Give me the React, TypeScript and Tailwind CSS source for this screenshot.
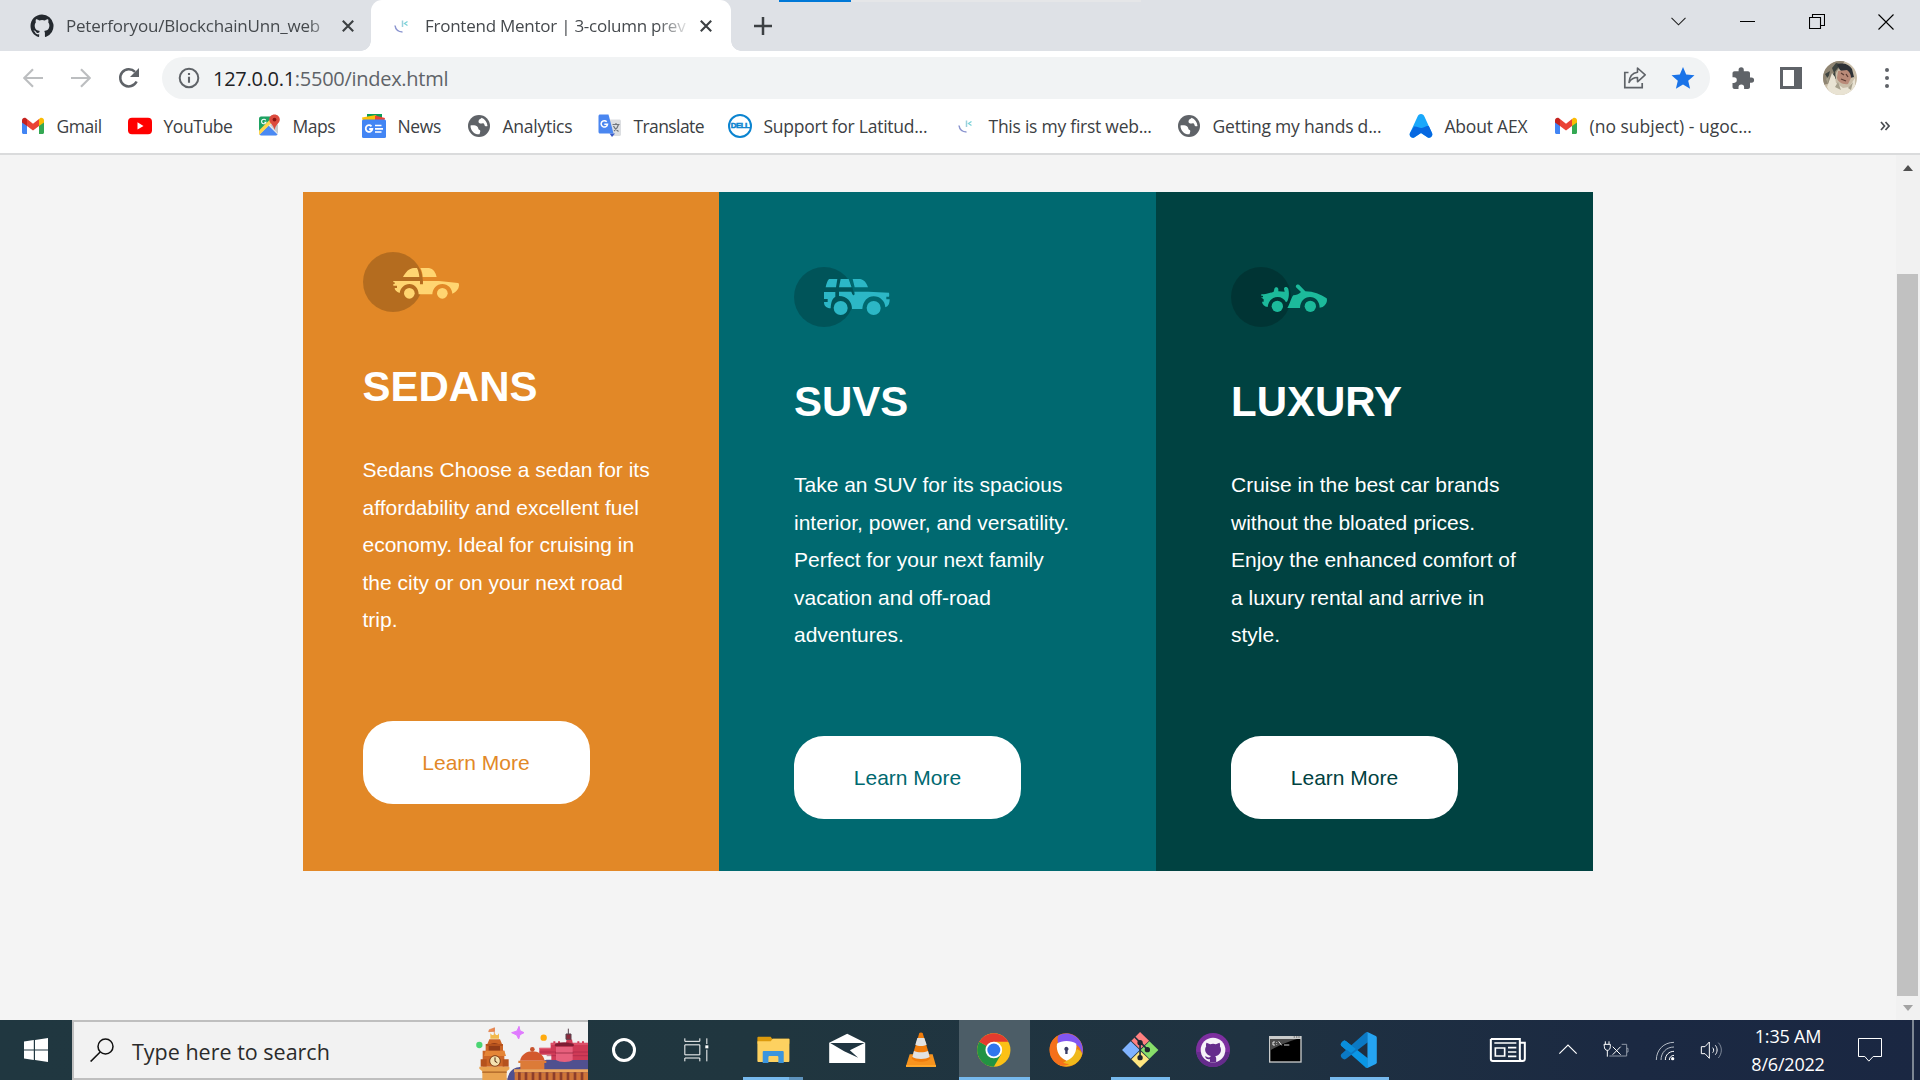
import React from "react";
import type { ReactNode } from "react";

function Svg({ vb, className, children }: { vb: string; className: string; children: ReactNode }) {
  return (
    <svg viewBox={vb} className={className + " shrink-0"} fill="none">
      {children}
    </svg>
  );
}

/* ---------- site icons ---------- */

const octocat =
  "M12 .5C5.65.5.5 5.65.5 12c0 5.1 3.3 9.4 7.86 10.9.58.1.79-.25.79-.56v-2.1c-3.2.7-3.87-1.4-3.87-1.4-.52-1.33-1.28-1.69-1.28-1.69-1.05-.71.08-.7.08-.7 1.16.08 1.77 1.19 1.77 1.19 1.03 1.77 2.7 1.26 3.36.96.1-.75.4-1.26.73-1.55-2.55-.29-5.24-1.28-5.24-5.68 0-1.26.45-2.28 1.19-3.09-.12-.29-.52-1.46.11-3.04 0 0 .97-.31 3.17 1.18a11 11 0 0 1 5.76 0c2.2-1.49 3.16-1.18 3.16-1.18.63 1.58.23 2.75.11 3.04.74.81 1.19 1.83 1.19 3.09 0 4.41-2.69 5.38-5.25 5.67.41.36.78 1.06.78 2.13v3.16c0 .31.21.67.8.56A11.5 11.5 0 0 0 12 .5Z";

const GithubIcon = () => (
  <Svg vb="0 0 24 24" className="h-6 w-6">
    <path d={octocat} fill="#24292f" />
  </Svg>
);

const MentorIcon = () => (
  <Svg vb="0 0 24 24" className="h-6 w-6">
    <path d="M13.500 6.500v6.500" stroke="#9bd0dc" strokeWidth="1.500" />
    <path d="M18.500 7.500l-3 2 3 2" stroke="#7cd3d9" strokeWidth="1.300" />
    <path d="M6 11.500c.6 4 3.400 6.400 7.500 6.400" stroke="#8a94cf" strokeWidth="1.500" />
  </Svg>
);

const GmailIcon = () => (
  <Svg vb="0 0 24 24" className="h-6 w-6">
    <path d="M1 6v12.500c0 .9.700 1.500 1.500 1.500H6v-9z" fill="#4285f4" />
    <path d="M18 11v9h3.500c.9 0 1.500-.7 1.500-1.500V6z" fill="#34a853" />
    <path d="M6 5v7l6 4.600 6-4.600V5l-6 4.700z" fill="#ea4335" />
    <path d="M1 6.500C1 4.300 3.400 3.200 5 4.300L6 5v7L1 8.500z" fill="#c5221f" />
    <path d="M23 6.500c0-2.200-2.400-3.300-4-2.200L18 5v7l5-3.500z" fill="#fbbc04" />
  </Svg>
);

const YoutubeIcon = () => (
  <Svg vb="0 0 24 24" className="h-6 w-6">
    <rect x="0" y="3.700" width="24" height="16.500" rx="4" fill="#ff0000" />
    <path d="M9.500 8.300v7.200l6-3.600z" fill="#fff" />
  </Svg>
);

const MapsIcon = () => (
  <Svg vb="0 0 24 24" className="h-6 w-6">
    <rect x="2" y="2.500" width="19" height="19" rx="2" fill="#e8eaed" />
    <path d="M4 2.500h13L2 18V4.500c0-1 .9-2 2-2z" fill="#1ea362" />
    <path d="M2.500 20.500L11.500 11.500l9 9c-.5.700-1 1-1.600 1H4.500c-.8 0-1.500-.3-2-1z" fill="#4a89f3" />
    <path d="M2 16.500L15.500 3l3.500 1.500L2.500 20.800c-.4-.4-.5-.8-.5-1.300z" fill="#ffd54b" />
    <path d="M13 11l8 8.500V11l-3-2z" fill="#c8cacd" />
    <path d="M17.500 0.500c3 0 5.300 2.200 5.300 5 0 3.800-4.300 5-5.300 10.500-1-5.500-5.300-6.700-5.300-10.500 0-2.800 2.300-5 5.300-5z" fill="#dc4b3e" />
    <circle cx="17.500" cy="5.600" r="1.900" fill="#891411" />
    <path d="M8.800 6.200a2.300 2.300 0 1 0 .3 2H7.200" stroke="#fff" strokeWidth="1.100" />
  </Svg>
);

const NewsIcon = () => (
  <Svg vb="0 0 24 24" className="h-6 w-6">
    <path d="M5 0h15v8H5z" fill="#0c9d58" />
    <path d="M0 3.500L14 1l3 7H1z" fill="#ffc107" />
    <path d="M13 1.500l10 2.500-1 4h-9z" fill="#ea4335" />
    <rect x="0" y="5.500" width="24" height="18.500" rx="1.500" fill="#4285f4" />
    <path d="M9.500 12.300a3.300 3.300 0 1 0 .8 2.700H7.200" stroke="#fff" strokeWidth="1.800" />
    <path d="M13 11.500h6.500M13 14.800h8M13 18h6.500" stroke="#fff" strokeWidth="1.700" />
  </Svg>
);

const GlobeIcon = () => (
  <Svg vb="0 0 24 24" className="h-6 w-6">
    <circle cx="12" cy="12" r="11" fill="#5f6368" />
    <path d="M3.500 11.500c2.500-.3 5.500-.2 7 1.200 1.300 1.300.3 2.700 2.200 3.300 1 .4.500 2.300-.2 4.300-5 .4-9-3.300-9-8.800z" fill="#fff" />
    <path d="M14.500 3.800c-.3 1.200-2.300 1.200-2.800 2.700-.5 1.400 0 2.700 1.400 3 1.900.3 2.300-.8 3.600 0 1.200.8.4 2.300 1.800 2.700.8.200 1.500.100 2-.2-.3-3.700-2.500-6.800-6-8.200z" fill="#fff" />
  </Svg>
);

const TranslateIcon = () => (
  <Svg vb="0 0 24 24" className="h-6 w-6">
    <path d="M9 5.500h12.500c.8 0 1.500.7 1.500 1.500v13.500c0 .8-.7 1.500-1.500 1.500H14z" fill="#dcdee1" />
    <path d="M14.500 10.500h7M18 9v1.500M20.500 10.500c-.7 3-2.500 5-4.500 6.500M15.500 12c1 2.500 2.700 4 5 5.500" stroke="#70767c" strokeWidth="1.200" />
    <path d="M11.500 19.500h5.500L14 23z" fill="#3a5bc7" />
    <path d="M2 .5h8.500l5 19H2c-.8 0-1.500-.7-1.500-1.500V2C.5 1.200 1.200.5 2 .5z" fill="#4a86f0" />
    <path d="M8.700 7.700a3.200 3.200 0 1 0 .8 2.600H6.300" stroke="#fff" strokeWidth="1.500" />
  </Svg>
);

const DellIcon = () => (
  <div className="flex h-6 w-6 shrink-0 items-center justify-center rounded-full border-2 border-[#0b84d0] bg-white">
    <span className="font-['Liberation_Sans'] text-[8px] font-black leading-none tracking-[-0.6px] text-[#0b84d0] [-webkit-text-stroke:0.5px_#0b84d0]">DELL</span>
  </div>
);

const AexIcon = () => (
  <Svg vb="0 0 24 24" className="h-6 w-6">
    <path d="M12 0c1.800 0 2.800 1.200 3.400 2.500L23 19c1.300 3-1.500 5.500-4.200 4.500L12 19l-6.800 4.500C2.500 24.500-.3 22 1 19L8.600 2.500C9.200 1.200 10.200 0 12 0z" fill="#19a8fb" />
    <path d="M5 12.500c4-.5 6 3 10 .8 2-1 3-1.300 4.800-1.200L23 19c1.300 3-1.500 5.500-4.200 4.500L12 19l-6.800 4.500C2.500 24.500-.3 22 1 19z" fill="#0668e1" />
  </Svg>
);

/* ---------- browser chrome ---------- */

const ui = "font-['Open_Sans',sans-serif] whitespace-nowrap";

const CloseTab = () => (
  <Svg vb="0 0 12 12" className="h-3 w-3">
    <path d="M.8.800l10.400 10.400M11.200.800L.8 11.200" stroke="#3c4043" strokeWidth="2.100" />
  </Svg>
);

function TabStrip() {
  return (
    <div className="relative flex h-[51px] items-stretch bg-[#dee1e6]">
      <div className="flex w-[371px] items-center pl-[30px]">
        <GithubIcon />
        <div className={ui + " ml-3 w-[262px] text-[17px] tracking-[-0.2px] text-[#45494d] [mask-image:linear-gradient(to_right,#000_92%,rgba(0,0,0,0.3))]"}>
          Peterforyou/BlockchainUnn_web
        </div>
        <div className="ml-[14px]"><CloseTab /></div>
      </div>
      <div className="relative flex w-[360px] items-center rounded-t-[11px] bg-white pl-[18px]">
        <MentorIcon />
        <div className={ui + " ml-[12px] w-[263px] text-[17px] tracking-[-0.25px] text-[#45494d] [mask-image:linear-gradient(to_right,#000_88%,rgba(0,0,0,0.1))]"}>
          Frontend Mentor | 3-column prev
        </div>
        <div className="ml-[12px]"><CloseTab /></div>
        <div className="absolute -left-[10px] bottom-0 h-[10px] w-[10px] bg-[radial-gradient(circle_at_0_0,#dee1e6_9.500px,#fff_10px)]" />
        <div className="absolute -right-[10px] bottom-0 h-[10px] w-[10px] bg-[radial-gradient(circle_at_100%_0,#dee1e6_9.500px,#fff_10px)]" />
      </div>
      <div className="flex items-center pl-[23px]">
        <Svg vb="0 0 18 18" className="h-[18px] w-[18px]">
          <path d="M9 0v18M0 9h18" stroke="#3c4043" strokeWidth="2.500" />
        </Svg>
      </div>
      <div className="ml-auto flex h-[43px] items-center">
        <div className="flex w-[69px] justify-center">
          <Svg vb="0 0 15 9" className="h-[9px] w-[15px]"><path d="M.5.800l7 7 7-7" stroke="#222" strokeWidth="1.100" /></Svg>
        </div>
        <div className="flex w-[69px] justify-center">
          <div className="h-px w-[15px] bg-black" />
        </div>
        <div className="flex w-[69px] justify-center">
          <Svg vb="0 0 16 16" className="h-4 w-4">
            <path d="M.5 3.500h11v11H.5zM3.500 3.500v-3h12v11h-4" stroke="#000" strokeWidth="1.100" />
          </Svg>
        </div>
        <div className="flex w-[69px] justify-center">
          <Svg vb="0 0 16 16" className="h-4 w-4"><path d="M.5.500l15 15M15.500.500l-15 15" stroke="#000" strokeWidth="1.100" /></Svg>
        </div>
      </div>
      <div className="absolute left-[779px] top-0 flex h-[2px] w-[362px] bg-[#e5e6e8]">
        <div className="w-[72px] bg-[#0078d7]" />
      </div>
    </div>
  );
}

function Avatar() {
  return (
    <Svg vb="0 0 34 34" className="h-[34px] w-[34px] rounded-full">
      <rect width="34" height="34" fill="#c9bda8" />
      <path d="M0 8l12-8h10l-8 10-6 12-8 2z" fill="#8f8573" />
      <path d="M9 7l4-5 5 1-7 9zM2 13l5-3-2 8zM8 15l4-4 1 7z" fill="#3e4440" />
      <path d="M14 4c5-3 12-1 15 4l2 8-4 1-10-8z" fill="#2d3136" />
      <path d="M15 10l9-1c3 2 4 5 4 8l-3 6c-5 1-10-2-11-6z" fill="#b98a78" />
      <path d="M18 12l3 2M23 13l2 3M18 18l5 2" stroke="#5c3c34" strokeWidth="1.300" />
      <path d="M4 26l5-14 3 4 1 6 7 5 6-1 6-9v17H8z" fill="#e9e3d3" />
      <path d="M12 26l3-5 3 8zM25 27l5-6-2 8zM3 18l3-3-1 8z" fill="#a7a08c" />
    </Svg>
  );
}

function Toolbar() {
  return (
    <div className="flex h-[54px] items-center bg-white pl-[23px]">
      <Svg vb="0 0 20 20" className="h-5 w-5"><path d="M20 10H1.500M10 1.200L1.200 10l8.800 8.800" stroke="#bcbec0" strokeWidth="2.200" /></Svg>
      <Svg vb="0 0 20 20" className="ml-7 h-5 w-5"><path d="M0 10h18.500M10 1.200L18.800 10 10 18.800" stroke="#bcbec0" strokeWidth="2.200" /></Svg>
      <Svg vb="0 0 22 22" className="ml-[27px] h-[22px] w-[22px]">
        <path d="M18.600 14.500A8.600 8.600 0 1 1 17 4.800" stroke="#5f6368" strokeWidth="2.500" />
        <path d="M21 1v9h-9z" fill="#5f6368" />
      </Svg>
      <div className="ml-[22px] flex h-[42px] w-[1548px] items-center rounded-full bg-[#f1f3f4] pl-[16px]">
        <Svg vb="0 0 22 22" className="h-[22px] w-[22px]">
          <circle cx="11" cy="11" r="9.300" stroke="#5f6368" strokeWidth="2" />
          <path d="M11 9.800v6M11 6v2.100" stroke="#5f6368" strokeWidth="2.100" />
        </Svg>
        <div className={ui + " ml-[13px] mt-[2px] text-[20px] tracking-[-0.28px] text-[#5f6368]"}>
          <span className="text-[#202124]">127.0.0.1</span>:5500/index.html
        </div>
        <Svg vb="0 0 24 24" className="ml-auto h-6 w-6">
          <path d="M5.500 6.500H1.800v15.200h17.400V17" stroke="#5f6368" strokeWidth="1.700" />
          <path d="M14.500 2v4.300C9 7 6.500 11 6 16.500c2-3.500 4.500-5 8.500-5v4.300l7.700-7z" stroke="#5f6368" strokeWidth="1.600" strokeLinejoin="round" />
        </Svg>
        <Svg vb="0 0 24 24" className="ml-6 mr-[15px] h-6 w-6">
          <path d="M12 1l3.200 7.600 8.300.7-6.300 5.400 1.900 8.100L12 18.500l-7.100 4.300 1.900-8.100L.5 9.300l8.300-.7z" fill="#1a73e8" />
        </Svg>
      </div>
      <Svg vb="0 0 24 24" className="ml-[21px] h-6 w-6">
        <path d="M20.500 11.500H19V7.300c0-1.100-.9-2-2-2h-4.200V3.800a2.600 2.600 0 0 0-5.200 0v1.500H3.500c-1.100 0-2 .9-2 2v4H3a2.800 2.800 0 0 1 0 5.600H1.500v4c0 1.100.9 2 2 2h4v-1.500a2.800 2.800 0 0 1 5.600 0v1.500H17c1.100 0 2-.9 2-2v-4.200h1.500a2.600 2.600 0 0 0 0-5.200z" fill="#5f6368" />
      </Svg>
      <div className="ml-[25px] h-[22px] w-[22px] border-[3px] border-r-[8px] border-[#5f6368]" />
      <div className="ml-[21px]"><Avatar /></div>
      <div className="ml-[28px] flex flex-col gap-[4px]">
        <div className="h-1 w-1 rounded-full bg-[#5f6368]" />
        <div className="h-1 w-1 rounded-full bg-[#5f6368]" />
        <div className="h-1 w-1 rounded-full bg-[#5f6368]" />
      </div>
    </div>
  );
}

const bookmarks: { label: string; icon: ReactNode; box: string }[] = [
  { label: "Gmail", icon: <GmailIcon />, box: "w-[107px] tracking-[-0.45px]" },
  { label: "YouTube", icon: <YoutubeIcon />, box: "w-[129px] tracking-[-0.45px]" },
  { label: "Maps", icon: <MapsIcon />, box: "w-[105px] tracking-[-0.45px]" },
  { label: "News", icon: <NewsIcon />, box: "w-[105px] tracking-[-0.35px]" },
  { label: "Analytics", icon: <GlobeIcon />, box: "w-[131px] tracking-[-0.25px]" },
  { label: "Translate", icon: <TranslateIcon />, box: "w-[130px] tracking-[-0.6px]" },
  { label: "Support for Latitud...", icon: <DellIcon />, box: "w-[225px] tracking-[-0.25px]" },
  { label: "This is my first web...", icon: <MentorIcon />, box: "w-[224px] tracking-[-0.25px]" },
  { label: "Getting my hands d...", icon: <GlobeIcon />, box: "w-[232px] tracking-[-0.2px]" },
  { label: "About AEX", icon: <AexIcon />, box: "w-[145px] tracking-[-0.2px]" },
  { label: "(no subject) - ugoc...", icon: <GmailIcon />, box: "w-[220px] tracking-[0px]" },
];

function BookmarkBar() {
  return (
    <div className="flex h-[50px] items-center border-b-2 border-[#dadbdc] bg-white pb-[6px] pl-[21px]">
      {bookmarks.map((b, i) => (
        <div key={i} className={b.box + " flex shrink-0 items-center gap-[11.500px]"}>
          {b.icon}
          <span className={ui + " text-[17.500px] text-[#3c4043]"}>{b.label}</span>
        </div>
      ))}
      <Svg vb="0 0 10 10" className="ml-auto mr-[30px] h-[10px] w-[10px]">
        <path d="M1 1l3.500 4L1 9M5.500 1L9 5 5.500 9" stroke="#4a4d51" strokeWidth="1.700" />
      </Svg>
    </div>
  );
}

/* ---------- page ---------- */

const SedanCar = () => (
  <Svg vb="69 66 288 180" className="h-[60px] w-24">
    <circle cx="159" cy="156" r="90" fill="#000" fillOpacity=".2" />
    <g fill="#ffd571">
      <path d="M189 141c8-14 17-26 33-27h9c4 8 6 17 7 27zM241 114h26c13 2 20 14 23 27h-42c0-10-3-19-7-27z" />
      <path d="M160 153h80v10h9v-10h48c20 2 38 4 57 6 3 1 3 4 3 8-1 10-8 18-20 24-1-16-13-29-30-29s-29 13-30 31h-41c0-18-12-31-28-31-15 0-27 12-29 27-10-4-15-8-15-15h7v-7h-11v-5h4v-5c-4 0-5-2-4-4z" />
      <circle cx="208" cy="190" r="16" /><circle cx="307" cy="190" r="16" />
    </g>
  </Svg>
);

const SuvCar = () => (
  <Svg vb="42 51 288 180" className="h-[60px] w-24">
    <circle cx="132" cy="141" r="90" fill="#000" fillOpacity=".2" />
    <g fill="#2cb7c6">
      <path d="M147 87h25l-4 25h-31c2-9 4-18 10-25zM182 87h24l9 25h-38zM218 87h23c13 3 19 13 23 25h-40z" />
      <path d="M132 126h34v14c-8 5-13 14-14 35-13-1-20-7-20-19h11v-9h-11zM177 125h37l3 8c2 4 7 3 7-2l-1-6h42l62 3c1 5 1 8 0 12h-8v8h10c0 12-3 21-13 24-1-19-16-33-35-33-18 0-32 14-34 38h-31c0-22-15-39-39-39z" />
      <circle cx="182" cy="174" r="21" /><circle cx="281" cy="174" r="21" />
    </g>
  </Svg>
);

const LuxuryCar = () => (
  <Svg vb="63 51 288 180" className="h-[60px] w-24">
    <circle cx="153" cy="141" r="90" fill="#000" fillOpacity=".2" />
    <g fill="#1cba9b">
      <path d="M154 133c12 0 25-3 37-8l2-8c1-7 11-7 12 0v7l19 1-2-8c0-7 10-8 13 0 3 13 2 26-3 37l-4 3c-5-10-14-16-25-16-16 0-28 12-30 30-10-2-16-7-17-16h5v-7l-8-6h6v-4c-5 0-6-2-5-4z" />
      <path d="M258 112c-3-8 8-11 12-5l16 17c24 1 46 8 64 21 3 8-1 18-12 26l-9 2c0-18-12-32-29-32s-29 13-30 33h-38c9-14 11-30 18-38 8-1 16-2 23-10z" />
      <circle cx="202" cy="169" r="17" /><circle cx="301" cy="169" r="17" />
    </g>
  </Svg>
);

type CardProps = { car: ReactNode; title: string; lines: string[]; className: string; button: string };

function Card({ car, title, lines, className, button }: CardProps) {
  return (
    <div className={className + " flex flex-col items-start font-['Liberation_Sans',Arial,sans-serif] text-white"}>
      {car}
      <h2 className="mt-[51px] text-[42px] font-bold leading-[48px]">{title}</h2>
      <p className="mt-10 whitespace-nowrap text-[21px] leading-[37.500px]">
        {lines.map((l) => (
          <span key={l} className="block">{l}</span>
        ))}
      </p>
      <button className={button + " mt-[82px] h-[83px] w-[227px] rounded-[30px] bg-white pt-[2px] text-[21px]"}>Learn More</button>
    </div>
  );
}

function Page() {
  return (
    <div className="flex min-h-0 flex-1 bg-[#f4f4f4]">
      <div className="flex flex-1 pl-[303px] pt-[37px]">
        <div className="flex h-[679px]">
          <Card
            className="w-[416px] bg-[#e28827] pl-[59.500px] pt-[60px]"
            car={<SedanCar />}
            title="SEDANS"
            lines={["Sedans Choose a sedan for its", "affordability and excellent fuel", "economy. Ideal for cruising in", "the city or on your next road", "trip."]}
            button="text-[#e28827]"
          />
          <Card
            className="w-[437px] bg-[#006970] pl-[75px] pt-[75px]"
            car={<SuvCar />}
            title="SUVS"
            lines={["Take an SUV for its spacious", "interior, power, and versatility.", "Perfect for your next family", "vacation and off-road", "adventures."]}
            button="text-[#006970]"
          />
          <Card
            className="w-[437px] bg-[#004241] pl-[75px] pt-[75px]"
            car={<LuxuryCar />}
            title="LUXURY"
            lines={["Cruise in the best car brands", "without the bloated prices.", "Enjoy the enhanced comfort of", "a luxury rental and arrive in", "style."]}
            button="text-[#004241]"
          />
        </div>
      </div>
      <div className="flex w-6 flex-col items-center bg-[#f1f1f1] pr-[1px]">
        <Svg vb="0 0 10 6" className="mt-[10px] h-[6px] w-[10px]"><path d="M5 0l5 6H0z" fill="#505050" /></Svg>
        <div className="mt-[103px] h-[722px] w-[21px] bg-[#c1c1c1]" />
        <Svg vb="0 0 10 6" className="mt-[9px] h-[6px] w-[10px]"><path d="M0 0h10L5 6z" fill="#a3a3a3" /></Svg>
      </div>
    </div>
  );
}

/* ---------- taskbar ---------- */

const SearchArt = () => (
  <Svg vb="0 18 354 174" className="h-[58px] w-[118px]">
    <circle cx="28" cy="87" r="9.500" fill="#4bd573" />
    <circle cx="221" cy="65" r="9.500" fill="#ffab0f" />
    <path d="M147 31l3 13 12 6-12 6-4 13-6-12-15-7 16-5z" fill="#e07bff" stroke="#e07bff" strokeWidth="3" strokeLinejoin="round" />
    <path d="M112 192c2-20 14-36 34-38l84-23h124v61z" fill="#50508f" />
    <path d="M208 95h34v-15h8v-4h6v4h8v-4h6v4h18l2-10h16l2 10h14v-4h6v4h8v-4h6v4h12v52h-110v-16h-36z" fill="#cf3a56" />
    <path d="M208 98h34M242 84h112" stroke="#e8677c" strokeWidth="3" />
    <path d="M208 108h146M230 119h124" stroke="#a8284a" strokeWidth="2" />
    <path d="M258 92h50v40c-8 8-40 8-50 0z" fill="#e7607d" />
    <path d="M256 84c18-5 34-5 54 0v6h-54zM256 111h54" fill="#7e1d33" stroke="#7e1d33" strokeWidth="2" />
    <path d="M295 38v18M288 54h15v16h-15z" stroke="#59424e" fill="#8d2a3c" strokeWidth="3" />
    <path d="M150 134c4-18 20-28 37-28s33 10 37 28z" fill="#d3592d" />
    <circle cx="187" cy="100" r="7" fill="#c8542e" />
    <path d="M145 134h84v7h-6v20h-72v-20h-6z" fill="#dc7b38" />
    <path d="M132 160h222v9H132z" fill="#eda45a" />
    <path d="M134 169h220v23H134z" fill="#ce7438" />
    <path d="M148 169v23M168 169v23M189 169v23M210 169v23M231 169v23M252 169v23M273 169v23M294 169v23M315 169v23M336 169v23" stroke="#8c3e2b" strokeWidth="8" />
    <path d="M73 34v20M58 41l15-5v10l-17 1z" stroke="#dd7a45" strokeWidth="2" fill="#f08a4f" />
    <path d="M61 52l5 5h4l4-6 4 6h5l4-5v16H61z" fill="#f2b94d" />
    <path d="M58 70h32l6 14h3v20h4v48H38v-48h9V84h5z" fill="#cc6526" />
    <path d="M56 104V90c6-12 28-12 34 0v14z" fill="#923c17" />
    <path d="M32 130h18v22H32zM98 130h18v22H98zM48 84h50v6H48z" fill="#b5521d" />
    <path d="M47 104h56l5 16H42z" fill="#e58536" />
    <circle cx="75" cy="135" r="16" fill="#f5e2af" stroke="#7d3d16" strokeWidth="3" />
    <path d="M75 124v12l7 4" stroke="#4c2910" strokeWidth="3" />
    <path d="M28 152h90v8l-8 6v26H37v-26l-9-8z" fill="#e9a350" />
    <path d="M37 166h73v5H37z" fill="#b9712f" />
  </Svg>
);

function AppCell({ vb, children, bar, active }: { vb: string; children: ReactNode; bar?: ReactNode; active?: boolean }) {
  return (
    <div className="relative h-[60px] w-[73.200px] shrink-0">
      {active && <div className="absolute inset-y-0 left-[3px] w-[71px] bg-[#4c5d67]" />}
      <Svg vb={vb} className="relative h-[60px] w-[73.200px]">{children}</Svg>
      {bar}
    </div>
  );
}

const openBar = <div className="absolute bottom-0 left-[8px] h-[3px] w-[59px] bg-[#76b9ed]" />;

function Taskbar() {
  return (
    <div className="flex h-[60px] bg-[linear-gradient(to_right,#203740_0%,#20363f_40%,#1f3241_65%,#1b2942_85%,#1a2742_100%)]">
      <div className="flex w-[72px] items-center justify-center">
        <Svg vb="0 0 24 24" className="h-6 w-6">
          <path d="M0 3.500l9.800-1.400v9.300H0zM11 1.900L24 0v11.400H11zM0 12.600h9.800v9.300L0 20.500zM11 12.600h13V24l-13-1.900z" fill="#fff" />
        </Svg>
      </div>
      <div className="flex w-[516px] items-stretch border-2 border-r-0 border-[#bfbfbf] bg-[#f2f2f2]">
        <Svg vb="0 0 24 24" className="ml-4 mt-4 h-6 w-6">
          <circle cx="15.500" cy="8.500" r="7.500" stroke="#111" strokeWidth="1.500" />
          <path d="M10.200 14L.6 23.500" stroke="#111" strokeWidth="1.600" />
        </Svg>
        <div className={ui + " ml-[18px] mt-[13px] text-[21.500px] leading-[34px] text-[#2b2b2b]"}>Type here to search</div>
        <div className="-mb-[2px] ml-auto"><SearchArt /></div>
      </div>
      <div className="flex w-[72px] items-center justify-center">
        <div className="h-6 w-6 rounded-full border-[3px] border-white" />
      </div>
      <div className="flex w-[76.600px] items-center pl-6">
        <Svg vb="251 83 75 72" className="h-6 w-[25px]">
          <path d="M253.500 84v9h45v-9M253.500 153v-10h45v10M253.500 103.500h45v30h-45zM319.500 84v17M319.500 118v35" stroke="#fff" strokeWidth="3" />
          <rect x="315" y="105" width="9" height="9" fill="#fff" />
        </Svg>
      </div>
      <AppCell
        vb="409.8 30 219.6 180"
        bar={
          <div className="absolute bottom-0 left-[6px] flex h-[3px] w-[60px] bg-[#5e93bd]">
            <div className="w-[46px] bg-[#76b9ed]" />
          </div>
        }
      >
        <path d="M471 83c0-2 2-3 4-3h36l4 6h50c2 0 2 1 2 3v12h-96z" fill="#dc9a0c" />
        <path d="M471 94h40l6-8h48c2 0 2 1 2 3v64c0 2-1 3-3 3h-90c-2 0-3-1-3-3z" fill="#fdd160" />
        <path d="M487 126c0-2 1-3 3-3h57c2 0 3 1 3 3v33h-16v-17c0-2-1-4-4-4h-22c-3 0-4 2-4 4v17h-17z" fill="#3b95dd" />
      </AppCell>
      <AppCell vb="629.4 30 219.6 180">
        <path d="M687 98l54-27 54 27v61H687z" fill="#fff" />
        <path d="M690 99h103l-44 22 25 22-42-19z" fill="#203541" />
      </AppCell>
      <AppCell vb="849 30 219.6 180">
        <path d="M929 133h69l10 35-2 3h-86l-2-3z" fill="#f7931e" />
        <path d="M918 165h90v6h-90z" fill="#ffa72b" />
        <path d="M958 69c2-2 8-2 10 0l23 76c-8 14-48 14-56 0z" fill="#f07c0b" />
        <path d="M952 84h21l7 20c-9 5-26 5-34 0zM942 123c10 5 32 5 42 0l5 18c-11 8-41 8-52 0z" fill="#e2e2e2" />
      </AppCell>
      <AppCell active vb="1068.6 30 219.600 180" bar={<div className="absolute bottom-0 left-[3px] h-[3px] w-[71px] bg-[#76b9ed]" />}>
        <circle cx="1182" cy="120" r="50" fill="#fbc116" />
        <path d="M1182 120l-43.300-25A50 50 0 0 0 1182 170l22-37z" fill="#229342" />
        <path d="M1182 120l-43.300-25A50 50 0 0 1 1225.300 95H1182z" fill="#e33b2e" />
        <circle cx="1182" cy="120" r="25" fill="#fff" />
        <circle cx="1182" cy="120" r="19.500" fill="#3076ee" />
      </AppCell>
      <AppCell vb="88.2 30 219.6 180">
        <circle cx="200" cy="120" r="50" fill="#ec7a10" />
        <path d="M177 76A50 50 0 0 1 248 134c-3-22-18-34-38-38l-34 6c-3-10-3-18 1-26z" fill="#8256f0" />
        <path d="M248 132A50 50 0 0 1 172 161c26 0 42-16 60-44 8 4 14 8 16 15z" fill="#efb91b" />
        <path d="M173 78c-4 16-6 52 10 72 6 8 14 12 26 12-25 16-59-8-59-42 0-20 10-34 23-42z" fill="#f5701b" />
        <path d="M172 101c14-11 44-11 58 0 3 22-8 43-29 51-21-8-32-29-29-51z" fill="#fff" />
        <path d="M200 110a7 7 0 0 1 4 12.500V132h-7v-9.500A7 7 0 0 1 200 110z" fill="#3a3d66" />
      </AppCell>
      <AppCell vb="307.8 30 219.6 180" bar={openBar}>
        <path d="M391 94l27 26-27 26-26-26z" fill="#80b3ff" />
        <path d="M419 66l27 26-27 26-26-26z" fill="#ff8080" />
        <path d="M447 94l27 26-27 26-26-26z" fill="#87de6a" />
        <path d="M419 122l27 26-27 26-26-26z" fill="#ffe680" />
        <path d="M403 81l16 16v46M421 98l20 20" stroke="#1f3241" strokeWidth="5" />
        <circle cx="419" cy="98" r="8" fill="#1f2530" /><circle cx="419" cy="143" r="8" fill="#1f2530" /><circle cx="441" cy="119" r="8" fill="#1f2530" />
      </AppCell>
      <AppCell vb="527.4 30 219.6 180">
        <circle cx="638.500" cy="120" r="51" fill="#7d2f9f" />
        <path d="M588 126c4 28 24 45 50 45s46-17 50-45z" fill="#652c8c" />
        <circle cx="638.500" cy="120" r="37" fill="#f6f2f8" />
        <path d="M619 98l11 5c5-2 12-2 17 0l11-5c2 4 2 8 1 11 8 12 1 28-14 30 3 3 3 6 3 10v7h-19v-9c-8 2-12-1-15-8 5 0 6 4 15 3l3-4c-14-2-22-17-14-29-1-3-1-7 1-11z" fill="#652c8c" />
      </AppCell>
      <AppCell vb="747 30 219.600 180">
        <rect x="807" y="78" width="98" height="80" fill="#c9cbcb" />
        <rect x="811" y="87" width="90" height="67" fill="#000" />
        <path d="M811 87h80c-25 8-50 16-80 34z" fill="#4b4b4b" />
        <path d="M881 81h4M888 81h4M895 81h4" stroke="#555" strokeWidth="3" />
        <path d="M825 96h-6v9h6M830 97v2M830 103v2M836 94l9 12M852 105h16" stroke="#fff" strokeWidth="2.500" />
      </AppCell>
      <AppCell vb="966.600 30 219.600 180" bar={openBar}>
        <path d="M1023 102c0-3 6-9 9-10 2-1 4 0 6 1l66 52v29c-4 0-6-1-9-4l-70-62c-2-2-2-4-2-6z" fill="#0a97e6" />
        <path d="M1023 138c0 3 6 9 9 10 2 1 4 0 6-1l66-50V66c-4 0-6 1-9 4l-70 62c-2 2-2 4-2 6z" fill="#0b79c4" />
        <path d="M1023 102c0-3 6-9 9-10 2-1 4 0 6 1l30 24-14 12-29-21c-2-2-2-4-2-6z" fill="#0a8edb" />
        <path d="M1103 66l25 12c2 1 3 3 3 5v74c0 2-1 4-3 5l-25 12z" fill="#25a4f2" />
      </AppCell>
      <div className="ml-auto flex">
        <Svg vb="114 30 180 180" className="h-[60px] w-[60px]">
          <path d="M152.500 87h87v60c0 8 15 8 15 0V98h-15M152.500 87v60c0 4 2 6 6 6h90" stroke="#fff" strokeWidth="6" />
          <path d="M163 99h66M204 113h25M204 126h25M204 139h25" stroke="#fff" strokeWidth="5" />
          <path d="M166 114h28v24h-28z" stroke="#fff" strokeWidth="5" />
        </Svg>
        <Svg vb="294 30 162 180" className="h-[60px] w-[54px]"><path d="M358 131l26-26 26 26" stroke="#fff" strokeWidth="3.500" /></Svg>
        <Svg vb="456 30 144 180" className="h-[60px] w-12">
          <path d="M545 103h15v35h-52M560 115h4v11h-4" stroke="#8e97a5" strokeWidth="3" />
          <path d="M496 94v9M507 94v9M492 103h19v6c0 7-3 12-9 12s-9-5-9-12zM502 121v19M518 110l24 24M542 110l-24 24" stroke="#fff" strokeWidth="3" />
        </Svg>
        <Svg vb="600 30 144 180" className="h-[60px] w-12">
          <path d="M649 150c0-30 22-53 53-53M663 150c0-22 16-39 39-39" stroke="#b5bcc6" strokeWidth="3" />
          <path d="M676 150c0-15 11-26 26-26M688 150c0-8 6-14 14-14" stroke="#fff" strokeWidth="3" />
          <circle cx="698" cy="146" r="5" fill="#fff" />
        </Svg>
        <Svg vb="744 30 144 180" className="h-[60px] w-12">
          <path d="M784 110h11l13-14v49l-13-14h-11zM818 113c4 4 4 11 0 15M826 106c7 8 7 20 0 28" stroke="#fff" strokeWidth="3" />
          <path d="M835 98c12 12 12 32 0 46" stroke="#7e8898" strokeWidth="3" />
        </Svg>
        <div className={ui + " flex w-[104px] flex-col items-center pt-[2px] text-[18px] leading-[28px] text-white"}>
          <span className="tracking-[-0.2px]">1:35 AM</span>
          <span className="tracking-[-0.2px]">8/6/2022</span>
        </div>
        <Svg vb="1200 30 180 180" className="h-[60px] w-[60px]">
          <path d="M1255.500 85.500h69v54h-25l-13 14-12-14h-19z" stroke="#fff" strokeWidth="3" />
        </Svg>
        <div className="ml-3 mr-[6px] w-[2px] bg-[#7c8794]" />
      </div>
    </div>
  );
}

export default function App() {
  return (
    <div className="flex h-[1080px] w-[1920px] flex-col overflow-hidden bg-white">
      <TabStrip />
      <Toolbar />
      <BookmarkBar />
      <Page />
      <Taskbar />
    </div>
  );
}
